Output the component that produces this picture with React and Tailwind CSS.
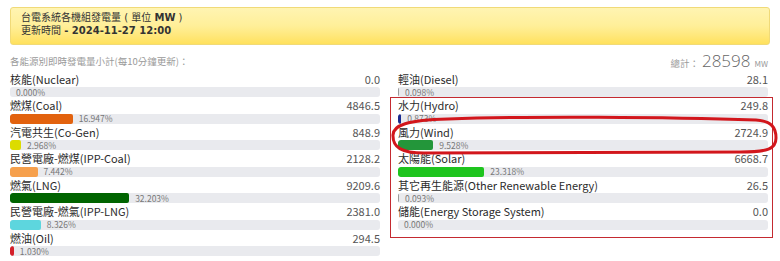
import React from 'react';

const leftRows = [
    { label: '核能(Nuclear)', value: '0.0', pct: '0.000', color: '' },
    { label: '燃煤(Coal)', value: '4846.5', pct: '16.947', color: '#e2620e' },
    { label: '汽電共生(Co-Gen)', value: '848.9', pct: '2.968', color: '#dcdc00' },
    { label: '民營電廠-燃煤(IPP-Coal)', value: '2128.2', pct: '7.442', color: '#f6a04d' },
    { label: '燃氣(LNG)', value: '9209.6', pct: '32.203', color: '#006400' },
    { label: '民營電廠-燃氣(IPP-LNG)', value: '2381.0', pct: '8.326', color: '#5dd6de' },
    { label: '燃油(Oil)', value: '294.5', pct: '1.030', color: '#d4202a' },
];

const rightRows = [
    { label: '輕油(Diesel)', value: '28.1', pct: '0.098', color: '#9a9a9a' },
    { label: '水力(Hydro)', value: '249.8', pct: '0.873', color: '#1a2a8e' },
    { label: '風力(Wind)', value: '2724.9', pct: '9.528', color: '#23963a' },
    { label: '太陽能(Solar)', value: '6668.7', pct: '23.318', color: '#1ec41e' },
    { label: '其它再生能源(Other Renewable Energy)', value: '26.5', pct: '0.093', color: '#9a9a9a' },
    { label: '儲能(Energy Storage System)', value: '0.0', pct: '0.000', color: '' },
];

const EnergyRow = ({ row }) => {
    const pct = parseFloat(row.pct);
    return (
        <div>
            <div className="flex justify-between items-center h-[16.5px] text-[11px] leading-[16px]">
                <span className="text-[#2b2b2b]">{row.label}</span>
                <span className="text-[#555]">{row.value}</span>
            </div>
            <div className="flex items-center h-[10px] bg-[#e9eaee] rounded-[3px] overflow-hidden">
                {pct > 0 && (
                    <div
                        className="h-full rounded-[2px] shrink-0"
                        style={{ width: `${pct}%`, minWidth: '1px', backgroundColor: row.color }}
                    />
                )}
                <span className="ml-[6px] text-[8.5px] leading-none text-[#777] whitespace-nowrap">
                    {row.pct}%
                </span>
            </div>
        </div>
    );
};

export default function App() {
    return (
        <div
            className="relative w-[780px] h-[261px] bg-white overflow-hidden"
            style={{ fontFamily: '"Noto Sans CJK TC", "Liberation Sans", sans-serif' }}
        >
            {/* Header */}
            <div className="mx-[10px] mt-[7px] h-[38px] border border-[#f0da78] rounded-[3px] bg-linear-to-b from-[#fff4b2] via-[#ffef98] to-[#ffe15c] px-[10px] pt-[3px] text-[10px] leading-[13px] text-[#333] font-['DejaVu_Sans','Noto_Sans_CJK_TC',sans-serif]">
                <div>台電系統各機組發電量 ( 單位 <b>MW</b> )</div>
                <div>更新時間 <b>- 2024-11-27 12:00</b></div>
            </div>

            <div className="grid grid-cols-[370px_370px] gap-x-[18px] px-[10px]">
                {/* Left column */}
                <div>
                    <div className="h-[25.5px] flex items-end pb-[3px] text-[9.5px] leading-[13px] text-[#9a9a9a]">
                        各能源別即時發電量小計(每10分鐘更新)：
                    </div>
                    {leftRows.map((row) => (
                        <EnergyRow key={row.label} row={row} />
                    ))}
                </div>

                {/* Right column */}
                <div>
                    <div className="h-[25.5px] flex items-end justify-end">
                        <div className="flex items-baseline leading-[17px] -mb-[1px]">
                            <span className="text-[9.5px] text-[#9a9a9a] mr-[3px]">總計：</span>
                            <span className="text-[17px] font-light text-[#666] font-['Open_Sans',sans-serif]">28598</span>
                            <span className="text-[8px] text-[#999] ml-[4px]">MW</span>
                        </div>
                    </div>
                    {rightRows.map((row) => (
                        <EnergyRow key={row.label} row={row} />
                    ))}
                </div>
            </div>

            {/* Annotations */}
            <div className="absolute left-[390px] top-[97px] w-[383px] h-[141px] border-[1.5px] border-[#c42a30]" />
            <svg className="absolute left-[388px] top-[112px]" width="392" height="46" viewBox="0 0 392 46">
                <path
                    d="M5 24 C4 13 20 8 60 7 C140 4 280 5 368 8 C384 9 388 16 388 26 C388 37 380 40 352 40 L36 41 C13 41 5 35 5 24 Z"
                    fill="none"
                    stroke="#d2161c"
                    strokeWidth="3"
                />
            </svg>
        </div>
    );
}
